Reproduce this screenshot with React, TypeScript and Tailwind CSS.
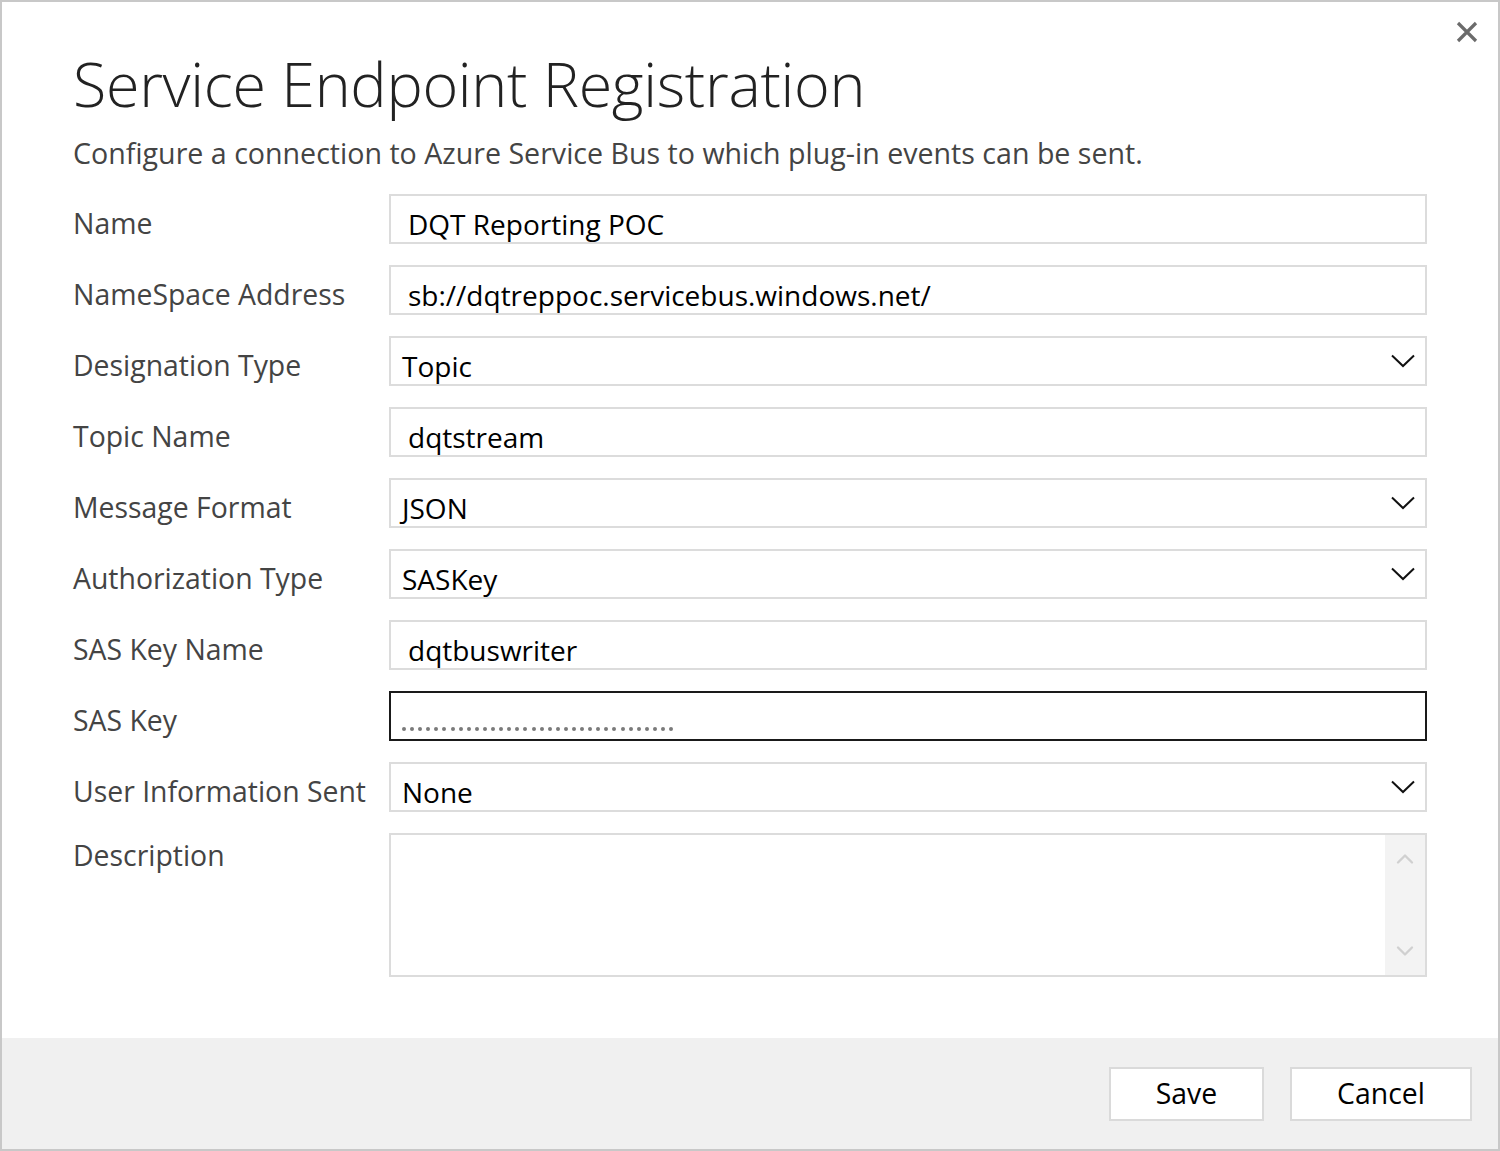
import { ChevronDown, ChevronUp } from 'lucide-react';

type Field =
  | { label: string; kind: 'text'; value: string }
  | { label: string; kind: 'select'; value: string }
  | { label: string; kind: 'password'; length: number };

const fields: Field[] = [
  { label: 'Name', kind: 'text', value: 'DQT Reporting POC' },
  { label: 'NameSpace Address', kind: 'text', value: 'sb://dqtreppoc.servicebus.windows.net/' },
  { label: 'Designation Type', kind: 'select', value: 'Topic' },
  { label: 'Topic Name', kind: 'text', value: 'dqtstream' },
  { label: 'Message Format', kind: 'select', value: 'JSON' },
  { label: 'Authorization Type', kind: 'select', value: 'SASKey' },
  { label: 'SAS Key Name', kind: 'text', value: 'dqtbuswriter' },
  { label: 'SAS Key', kind: 'password', length: 34 },
  { label: 'User Information Sent', kind: 'select', value: 'None' },
];

const font = "font-['Open_Sans','Noto_Sans',sans-serif]";

function Chevron() {
  return (
    <svg viewBox="0 0 24 14" className="w-[24px] h-[14px]">
      <path d="M1 1.5 L12 12 L23 1.5" fill="none" stroke="#111" strokeWidth="2" />
    </svg>
  );
}

function FieldControl({ field }: { field: Field }) {
  if (field.kind === 'password') {
    return (
      <div className="h-[50px] border-2 border-[#1a1a1a] bg-white flex items-end pl-[11px] pb-[8px]">
        <div className="flex gap-[4.1px]">
          {Array.from({ length: field.length }).map((_, i) => (
            <span key={i} className="block w-[4px] h-[4px] rounded-full bg-[#7a7a7a]" />
          ))}
        </div>
      </div>
    );
  }
  if (field.kind === 'select') {
    return (
      <div className="h-[50px] border-2 border-[#dcdcdc] bg-white flex items-center pl-[11px] pr-[10px]">
        <span className="flex-1 text-[28px] text-black pt-[10px]">{field.value}</span>
        <Chevron />
      </div>
    );
  }
  return (
    <div className="h-[50px] border-2 border-[#dcdcdc] bg-white flex items-center pl-[17px]">
      <span className="text-[28px] text-black pt-[10px]">{field.value}</span>
    </div>
  );
}

export default function App() {
  return (
    <div className={`w-[1500px] h-[1151px] bg-white border-2 border-[#c8c8c8] flex flex-col ${font}`}>
      <div className="relative flex-1 pl-[71px] pr-[71px]">
        <button className="absolute right-[20px] top-[19px] w-[22px] h-[22px] flex items-center justify-center">
          <svg viewBox="0 0 22 22" className="w-[22px] h-[22px]">
            <path d="M2 2 L20 20 M20 2 L2 20" stroke="#6b6b6b" strokeWidth="3.2" />
          </svg>
        </button>

        <h1 className="mt-[42px] text-[61px] leading-[80px] font-light text-[#222] tracking-[-0.3px]">
          Service Endpoint Registration
        </h1>
        <p className="mt-[9px] text-[28.6px] leading-[40px] text-[#444]">
          Configure a connection to Azure Service Bus to which plug-in events can be sent.
        </p>

        <div className="mt-[21px] grid grid-cols-[316px_1038px] gap-y-[21px]">
          {fields.map((f) => (
            <div key={f.label} className="contents">
              <div className="h-[50px] text-[28.4px] leading-[58px] text-[#444] whitespace-nowrap">{f.label}</div>
              <FieldControl field={f} />
            </div>
          ))}
          <div className="h-[50px] text-[28.4px] leading-[44px] text-[#444]">Description</div>
          <div className="h-[144px] border-2 border-[#dcdcdc] bg-white flex justify-end">
            <div className="w-[40px] h-full bg-[#f3f3f3] flex flex-col justify-between items-center py-[10px]">
              <ChevronUp className="w-[28px] h-[28px] text-[#d0d0d0]" strokeWidth={2} />
              <ChevronDown className="w-[28px] h-[28px] text-[#d0d0d0]" strokeWidth={2} />
            </div>
          </div>
        </div>
      </div>

      <div className="h-[111px] bg-[#f0f0f0] flex items-center justify-end gap-[26px] pr-[26px]">
        <button className="w-[155px] h-[54px] border-2 border-[#dadada] bg-white text-[28.4px] text-black">
          Save
        </button>
        <button className="w-[182px] h-[54px] border-2 border-[#dadada] bg-white text-[28.4px] text-black">
          Cancel
        </button>
      </div>
    </div>
  );
}
